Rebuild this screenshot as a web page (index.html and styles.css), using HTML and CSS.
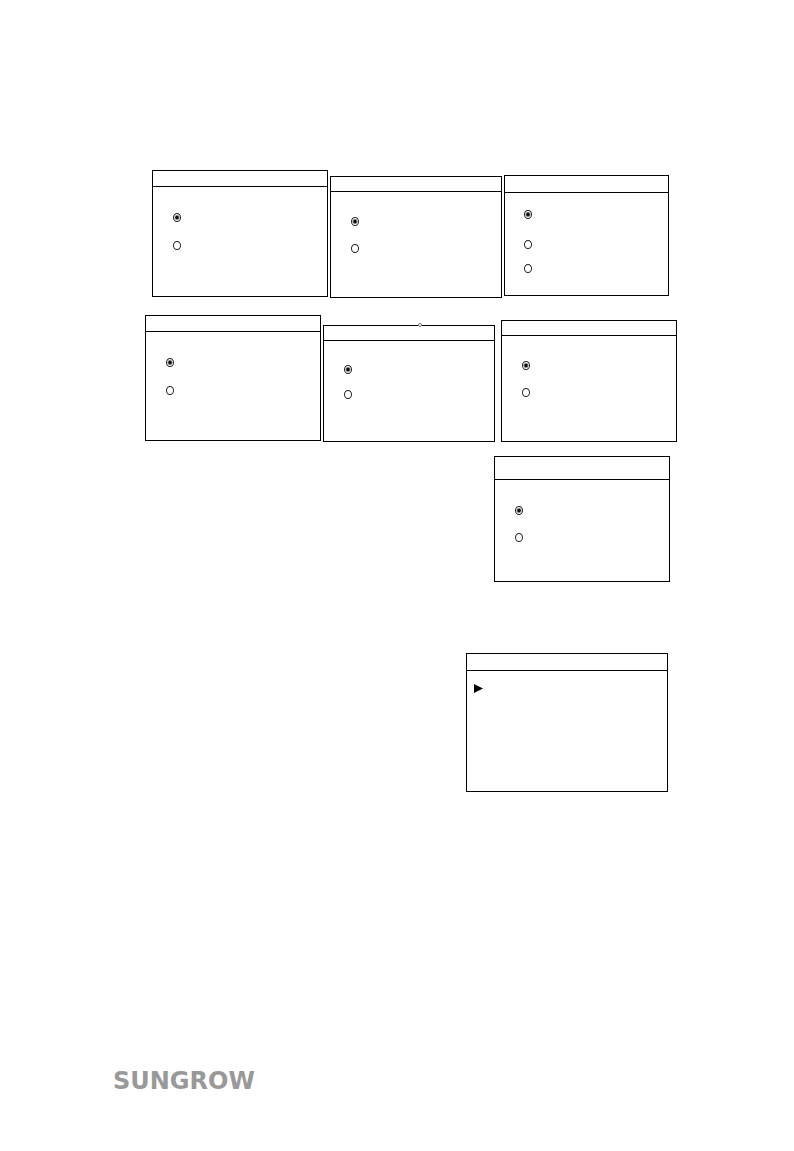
FILE: index.html
```
<!DOCTYPE html>
<html lang="en">
<head>
    <meta charset="UTF-8">
    <meta name="viewport" content="width=device-width, initial-scale=1.0">
    <title>Sungrow</title>
    <link rel="stylesheet" href="styles.css">
</head>
<body>
    <main>
        <div class="row row-top">
            <section class="panel wide">
                <div class="bar"></div>
                <div class="options">
                    <input type="radio" name="screen1" aria-label="Option 1" checked>
                    <input type="radio" name="screen1" aria-label="Option 2">
                </div>
            </section>
            <section class="panel medium lower">
                <div class="bar"></div>
                <div class="options">
                    <input type="radio" name="screen2" aria-label="Option 1" checked>
                    <input type="radio" name="screen2" aria-label="Option 2">
                </div>
            </section>
            <section class="panel narrow lower">
                <div class="bar"></div>
                <div class="options three">
                    <input type="radio" name="screen3" aria-label="Option 1" checked>
                    <input type="radio" name="screen3" aria-label="Option 2">
                    <input type="radio" name="screen3" aria-label="Option 3">
                </div>
            </section>
        </div>

        <div class="row row-middle">
            <section class="panel wide">
                <div class="bar"></div>
                <div class="options">
                    <input type="radio" name="screen4" aria-label="Option 1" checked>
                    <input type="radio" name="screen4" aria-label="Option 2">
                </div>
            </section>
            <section class="panel medium short lowest">
                <span class="handle"></span>
                <div class="bar"></div>
                <div class="options">
                    <input type="radio" name="screen5" aria-label="Option 1" checked>
                    <input type="radio" name="screen5" aria-label="Option 2">
                </div>
            </section>
            <section class="panel wide slim lower apart">
                <div class="bar"></div>
                <div class="options">
                    <input type="radio" name="screen6" aria-label="Option 1" checked>
                    <input type="radio" name="screen6" aria-label="Option 2">
                </div>
            </section>
        </div>

        <section class="panel single">
            <div class="bar"></div>
            <div class="options">
                <input type="radio" name="screen7" aria-label="Option 1" checked>
                <input type="radio" name="screen7" aria-label="Option 2">
            </div>
        </section>

        <section class="panel menu">
            <div class="bar"></div>
            <div class="menu-body">
                <svg class="arrow" width="9" height="9" viewBox="0 0 9 9" aria-hidden="true">
                    <path d="M0 0 L9 4.5 L0 9 Z"/>
                </svg>
            </div>
        </section>
    </main>

    <footer class="logo">SUNGROW</footer>
</body>
</html>
```

FILE: styles.css
```
body {
    margin: 0;
    background-color: #fff;
    font-family: "DejaVu Sans", sans-serif;
}
main {
    padding-top: 170px;
}
.row {
    display: flex;
    align-items: flex-start;
    gap: 2px;
}
.row-top {
    margin: 0 125px 17px 152px;
}
.row-middle {
    margin: 0 117px 14px 145px;
}

/* screens */
.panel {
    position: relative;
    box-sizing: border-box;
    border: 1px solid #000;
}
.wide {
    flex: 176 1 0;
}
.medium {
    flex: 172 1 0;
}
.narrow {
    flex: 165 1 0;
}
.lower {
    margin-top: 5px;
}
.row-top .medium {
    margin-top: 6px;
}
.lowest {
    margin-top: 10px;
}
.apart {
    margin-left: 4px;
}
.bar {
    height: 15px;
    border-bottom: 1px solid #000;
}
.medium .bar,
.slim .bar {
    height: 14px;
}
.narrow .bar,
.menu .bar {
    height: 16px;
}
.single .bar {
    height: 22px;
}

/* radio buttons */
.options {
    display: grid;
    gap: 19px;
    padding: 26px 20px 45px;
}
.row-top .wide .options {
    padding-bottom: 46px;
}
.medium .options,
.slim .options {
    gap: 18px;
    padding: 25px 20px 44px;
}
.short .options {
    gap: 16px;
    padding: 24px 20px 42px;
}
.single .options {
    gap: 18px;
    padding-bottom: 39px;
}
.options.three {
    grid-template-rows: 30px 24px 9px;
    gap: 0;
    align-items: start;
    padding: 17px 19px 22px;
}
.options input {
    appearance: none;
    box-sizing: border-box;
    width: 8px;
    height: 9px;
    margin: 0;
    border: 1px solid #222;
    border-radius: 50%;
}
.options input:checked {
    background: radial-gradient(circle, #000 1px, #fff 3px);
}
.handle {
    position: absolute;
    top: -3px;
    left: 55%;
    box-sizing: border-box;
    width: 4px;
    height: 4px;
    border: 1px solid #777;
    border-radius: 50%;
    background-color: #fff;
}

.single {
    width: 176px;
    margin: 0 124px 71px auto;
}
.menu {
    width: 202px;
    margin: 0 126px 0 auto;
}
.menu-body {
    padding: 13px 7px 98px;
}
.arrow {
    display: block;
}

.logo {
    padding: 275px 0 48px 113px;
    color: #999;
    font-size: 24px;
    font-weight: bold;
    line-height: 28px;
}
```
